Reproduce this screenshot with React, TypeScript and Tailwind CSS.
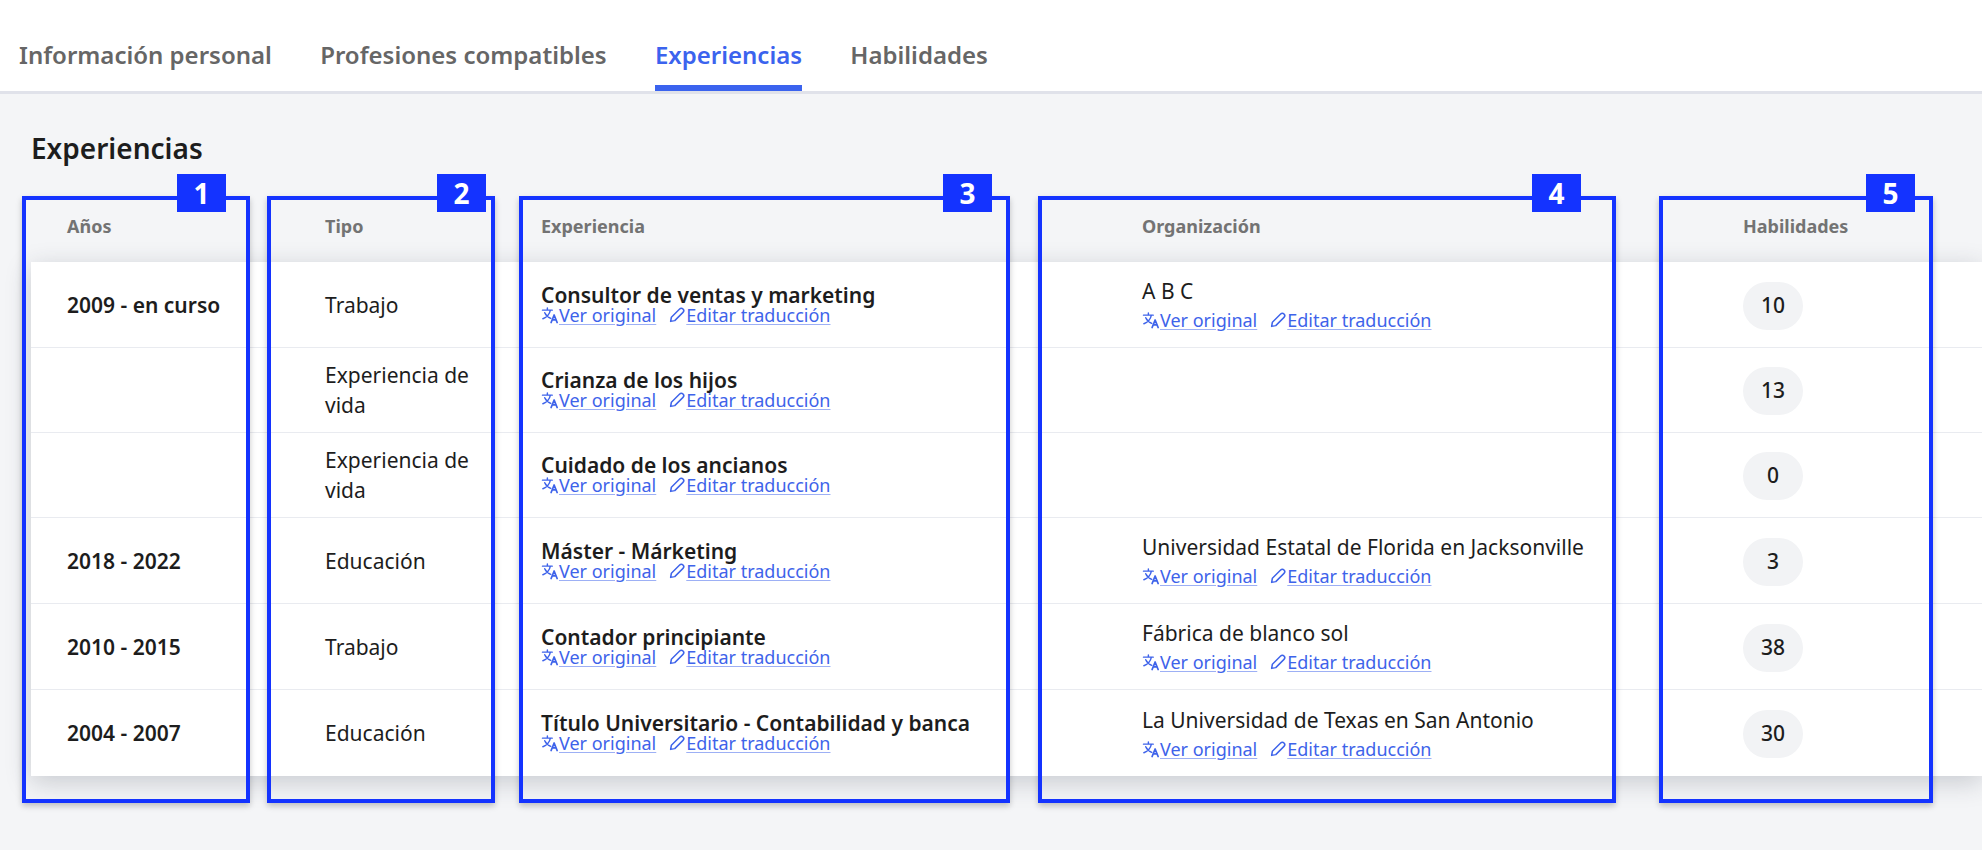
const tabs = ["Información personal", "Profesiones compatibles", "Experiencias", "Habilidades"];

const rows = [
  { years: "2009 - en curso", type: "Trabajo", title: "Consultor de ventas y marketing", org: "A B C", skills: 10 },
  { years: "", type: "Experiencia de vida", title: "Crianza de los hijos", org: "", skills: 13 },
  { years: "", type: "Experiencia de vida", title: "Cuidado de los ancianos", org: "", skills: 0 },
  { years: "2018 - 2022", type: "Educación", title: "Máster - Márketing", org: "Universidad Estatal de Florida en Jacksonville", skills: 3 },
  { years: "2010 - 2015", type: "Trabajo", title: "Contador principiante", org: "Fábrica de blanco sol", skills: 38 },
  { years: "2004 - 2007", type: "Educación", title: "Título Universitario - Contabilidad y banca", org: "La Universidad de Texas en San Antonio", skills: 30 },
];

const columns = "grid grid-cols-[294px_216px_601px_601px_1fr]";

function TranslateIcon() {
  return (
    <svg viewBox="0 0 24 24" className="h-[18px] w-[18px] shrink-0" fill="none" stroke="currentColor" strokeWidth={1.9} strokeLinecap="round" strokeLinejoin="round">
      <path d="M2 5.5h13M8.5 2.5v3M12.5 5.5c-1 5-5 9.500-10 11.500M5 9c1.500 3.500 4.500 6 8 7.500" />
      <path d="M13.500 22l4-10 4 10M15 18.500h5" strokeWidth={2.3} />
    </svg>
  );
}

function PencilIcon() {
  return (
    <svg viewBox="0 0 24 24" className="h-[18px] w-[18px] shrink-0" fill="none" stroke="currentColor" strokeWidth={2} strokeLinecap="round" strokeLinejoin="round">
      <path d="M3.500 20.500l1-5.500L15.500 4a3.100 3.100 0 0 1 4.500 4.500L9 19.500z" />
    </svg>
  );
}

function Links() {
  return (
    <div className="flex items-center gap-3 text-[18px] leading-[20px] text-[#3e63ea]">
      <a href="#" className="flex items-center underline decoration-[#9db0f5] underline-offset-2">
        <TranslateIcon />
        Ver original
      </a>
      <a href="#" className="flex items-center underline decoration-[#9db0f5] underline-offset-2">
        <PencilIcon />
        Editar traducción
      </a>
    </div>
  );
}

function Marker({ n, className, badge }: { n: number; className: string; badge: string }) {
  return (
    <div className={`absolute top-[196px] h-[607px] border-4 border-[#1433ff] shadow-[0_3px_6px_rgba(0,0,0,0.22)] ${className}`}>
      <div className={`absolute top-[-26px] flex h-[38px] w-[49px] items-center justify-center bg-[#1433ff] text-[28px] font-bold text-white ${badge}`}>
        {n}
      </div>
    </div>
  );
}

export default function App() {
  return (
    <div className="relative h-[850px] overflow-hidden bg-[#f4f5f7] font-['Noto_Sans',sans-serif] text-[#1d1d1d]">
      <nav className="flex h-[94px] items-end gap-[48.25px] border-b-[3px] border-[#e0e2ea] bg-white pl-[19px]">
        {tabs.map((tab) => (
          <a
            key={tab}
            href="#"
            className={`border-b-[6px] pb-[15px] text-[24px] leading-[30px] font-semibold ${
              tab === "Experiencias" ? "border-[#3b63ee] text-[#3b63ee]" : "border-transparent text-[#666666]"
            }`}
          >
            {tab}
          </a>
        ))}
      </nav>

      <main className="pl-[31px]">
        <h2 className="pt-[37px] text-[28px] leading-[34px] font-semibold">Experiencias</h2>

        <div className={`${columns} mt-[31px] h-[66px] pt-[18px] text-[18px] leading-[24px] font-bold text-[#737373]`}>
          <div className="pl-9">Años</div>
          <div>Tipo</div>
          <div>Experiencia</div>
          <div>Organización</div>
          <div>Habilidades</div>
        </div>

        <div className="bg-white shadow-[0_6px_24px_rgba(40,50,70,0.22)]">
          {rows.map((row) => (
            <div
              key={row.title}
              className={`${columns} items-center border-b border-[#e9ebf0] text-[21px] last:border-b-0 ${row.years ? "h-[86px]" : "h-[85px]"}`}
            >
              <div className="pl-9 leading-[30px] font-semibold">{row.years}</div>
              <div className="pr-12 leading-[30px]">{row.type}</div>
              <div className="h-10">
                <div className="leading-[20px] font-semibold">{row.title}</div>
                <Links />
              </div>
              <div>
                {row.org && (
                  <div className="pb-[3px]">
                    <div className="mb-1 leading-[30px]">{row.org}</div>
                    <Links />
                  </div>
                )}
              </div>
              <div className="flex pt-0.5">
                <span className="flex h-12 w-[60px] items-center justify-center rounded-full bg-[#f2f3f5] font-medium">
                  {row.skills}
                </span>
              </div>
            </div>
          ))}
        </div>
      </main>

      <Marker n={1} className="left-[22px] w-[228px]" badge="left-[151px]" />
      <Marker n={2} className="left-[267px] w-[228px]" badge="left-[166px]" />
      <Marker n={3} className="left-[519px] w-[491px]" badge="left-[420px]" />
      <Marker n={4} className="left-[1038px] w-[578px]" badge="left-[490px]" />
      <Marker n={5} className="left-[1659px] w-[274px]" badge="left-[203px]" />
    </div>
  );
}
